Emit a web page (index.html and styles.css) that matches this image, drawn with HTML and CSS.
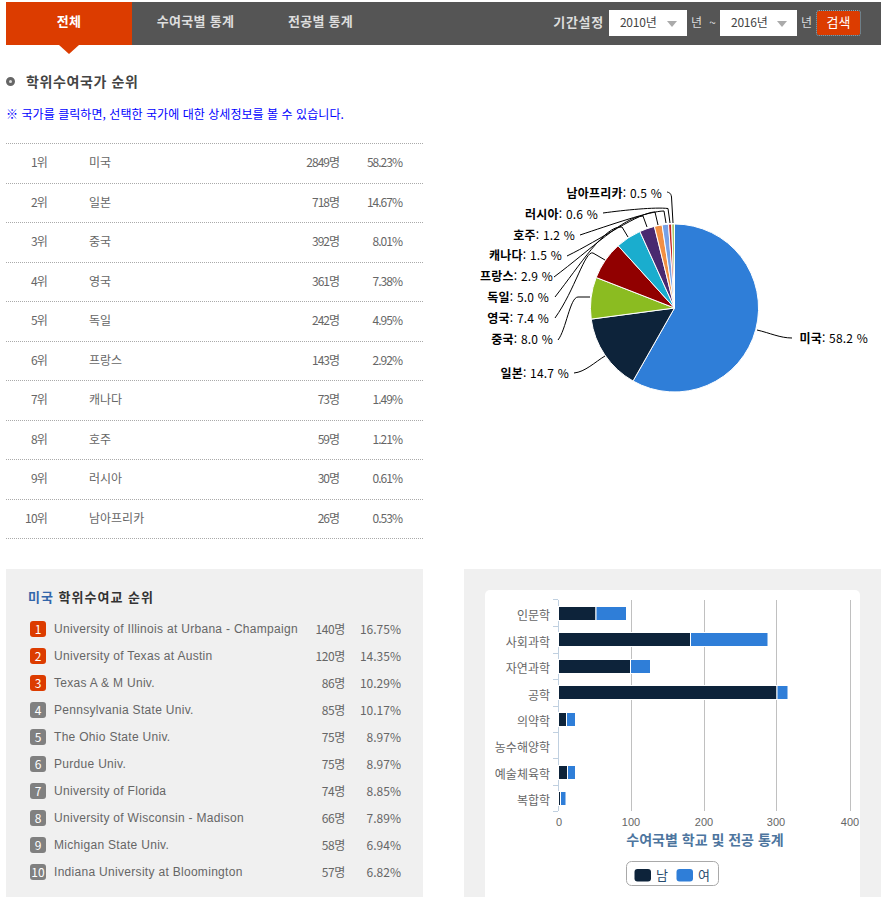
FILE: index.html
```html
<!DOCTYPE html>
<html lang="ko">

<head>
    <meta charset="UTF-8">
    <meta name="viewport" content="width=device-width, initial-scale=1.0">
    <title>학위수여국가 순위</title>
    <link rel="stylesheet" href="styles.css">
</head>

<body>
    <div class="page">
        <nav class="top-nav">
            <ul class="tabs">
                <li class="tab tab-active"><a href="#">전체</a></li>
                <li class="tab tab-country"><a href="#">수여국별 통계</a></li>
                <li class="tab tab-major"><a href="#">전공별 통계</a></li>
            </ul>
            <form class="period">
                <span class="period-label">기간설정</span>
                <span class="year-select"><select><option>2010년</option></select></span>
                <span class="period-text">년 ~</span>
                <span class="year-select year-select-end"><select><option>2016년</option></select></span>
                <span class="period-text">년</span>
                <button type="button" class="search-btn">검색</button>
            </form>
        </nav>

        <div class="columns">
            <section class="country-rank">
                <h2 class="section-title">학위수여국가 순위</h2>
                <p class="notice">※ 국가를 클릭하면, 선택한 국가에 대한 상세정보를 볼 수 있습니다.</p>
                <ul class="rank-list">
                    <li><span class="r-no">1위</span><span>미국</span><span class="r-num">2849명</span><span class="r-num">58.23%</span></li>
                    <li><span class="r-no">2위</span><span>일본</span><span class="r-num">718명</span><span class="r-num">14.67%</span></li>
                    <li><span class="r-no">3위</span><span>중국</span><span class="r-num">392명</span><span class="r-num">8.01%</span></li>
                    <li><span class="r-no">4위</span><span>영국</span><span class="r-num">361명</span><span class="r-num">7.38%</span></li>
                    <li><span class="r-no">5위</span><span>독일</span><span class="r-num">242명</span><span class="r-num">4.95%</span></li>
                    <li><span class="r-no">6위</span><span>프랑스</span><span class="r-num">143명</span><span class="r-num">2.92%</span></li>
                    <li><span class="r-no">7위</span><span>캐나다</span><span class="r-num">73명</span><span class="r-num">1.49%</span></li>
                    <li><span class="r-no">8위</span><span>호주</span><span class="r-num">59명</span><span class="r-num">1.21%</span></li>
                    <li><span class="r-no">9위</span><span>러시아</span><span class="r-num">30명</span><span class="r-num">0.61%</span></li>
                    <li><span class="r-no">10위</span><span>남아프리카</span><span class="r-num">26명</span><span class="r-num">0.53%</span></li>
                </ul>
            </section>

            <section class="pie-area">
                <svg class="pie" width="417" height="494" viewBox="464 45 417 494">
                    <!-- 조각 -->
                    <g transform="translate(674.5 308)" stroke="#fff" stroke-width="1" stroke-linejoin="round">
                        <path fill="#2f7ed8" d="M0 0V-84A84 84 0 1 1 -41.5 73Z"/>
                        <path fill="#0d233a" d="M0 0L-41.5 73A84 84 0 0 1 -83.3 11.1Z"/>
                        <path fill="#8bbc21" d="M0 0L-83.3 11.1A84 84 0 0 1 -78.3 -30.5Z"/>
                        <path fill="#910000" d="M0 0L-78.3 -30.5A84 84 0 0 1 -56.4 -62.3Z"/>
                        <path fill="#1aadce" d="M0 0L-56.4 -62.3A84 84 0 0 1 -34.6 -76.5Z"/>
                        <path fill="#492970" d="M0 0L-34.6 -76.5A84 84 0 0 1 -20.1 -81.6Z"/>
                        <path fill="#f28f43" d="M0 0L-20.1 -81.6A84 84 0 0 1 -12.4 -83.1Z"/>
                        <path fill="#77a1e5" d="M0 0L-12.4 -83.1A84 84 0 0 1 -6 -83.8Z"/>
                        <path fill="#c42525" d="M0 0L-6 -83.8A84 84 0 0 1 -2.8 -84Z"/>
                        <path fill="#a6c96a" d="M0 0L-2.8 -84A84 84 0 0 1 0 -84Z"/>
                    </g>
                    <!-- 연결선 -->
                    <g class="connector">
                        <path d="M757 330C770 333 780 338 792 338"/>
                        <path d="M605 356C595 362 585 372 574 373"/>
                        <path d="M590 297L578 297C570 297 566 330 558 340"/>
                        <path d="M605 260L593 253C585 250 575 290 555 318"/>
                        <path d="M628 237L622 227C605 225 580 265 555 297"/>
                        <path d="M647 227L643 216C625 216 590 250 554 277"/>
                        <path d="M658 225L655 212C640 212 600 240 567 256"/>
                        <path d="M666 223L664 211C650 211 610 225 580 235"/>
                        <path d="M670 223L668 208.5C655 207 625 210 603 213"/>
                        <path d="M673 223L671.5 197C671 193 669 192.5 667 192"/>
                    </g>
                    <!-- 라벨 -->
                    <g class="pie-label">
                        <text x="662" y="198"><tspan class="pie-name">남아프리카</tspan>: 0.5 %</text>
                        <text x="598" y="219"><tspan class="pie-name">러시아</tspan>: 0.6 %</text>
                        <text x="575" y="240"><tspan class="pie-name">호주</tspan>: 1.2 %</text>
                        <text x="562" y="260"><tspan class="pie-name">캐나다</tspan>: 1.5 %</text>
                        <text x="553" y="281"><tspan class="pie-name">프랑스</tspan>: 2.9 %</text>
                        <text x="549" y="302"><tspan class="pie-name">독일</tspan>: 5.0 %</text>
                        <text x="549" y="323"><tspan class="pie-name">영국</tspan>: 7.4 %</text>
                        <text x="553" y="344"><tspan class="pie-name">중국</tspan>: 8.0 %</text>
                        <text x="569" y="378"><tspan class="pie-name">일본</tspan>: 14.7 %</text>
                        <text x="868" y="343"><tspan class="pie-name">미국</tspan>: 58.2 %</text>
                    </g>
                </svg>
            </section>

            <section class="panel school-panel">
                <h3 class="panel-title"><em>미국</em> 학위수여교 순위</h3>
                <ol class="school-list">
                    <li><span class="badge badge-top">1</span><span class="s-name">University of Illinois at Urbana - Champaign</span><span class="s-num">140명</span><span class="s-pct">16.75%</span></li>
                    <li><span class="badge badge-top">2</span><span class="s-name">University of Texas at Austin</span><span class="s-num">120명</span><span class="s-pct">14.35%</span></li>
                    <li><span class="badge badge-top">3</span><span class="s-name">Texas A &amp; M Univ.</span><span class="s-num">86명</span><span class="s-pct">10.29%</span></li>
                    <li><span class="badge">4</span><span class="s-name">Pennsylvania State Univ.</span><span class="s-num">85명</span><span class="s-pct">10.17%</span></li>
                    <li><span class="badge">5</span><span class="s-name">The Ohio State Univ.</span><span class="s-num">75명</span><span class="s-pct">8.97%</span></li>
                    <li><span class="badge">6</span><span class="s-name">Purdue Univ.</span><span class="s-num">75명</span><span class="s-pct">8.97%</span></li>
                    <li><span class="badge">7</span><span class="s-name">University of Florida</span><span class="s-num">74명</span><span class="s-pct">8.85%</span></li>
                    <li><span class="badge">8</span><span class="s-name">University of Wisconsin - Madison</span><span class="s-num">66명</span><span class="s-pct">7.89%</span></li>
                    <li><span class="badge">9</span><span class="s-name">Michigan State Univ.</span><span class="s-num">58명</span><span class="s-pct">6.94%</span></li>
                    <li><span class="badge">10</span><span class="s-name">Indiana University at Bloomington</span><span class="s-num">57명</span><span class="s-pct">6.82%</span></li>
                </ol>
            </section>

            <section class="panel chart-panel">
                <div class="chart-card">
                    <svg class="bar-chart" width="375" height="307" viewBox="485 590 375 307">
                        <!-- 격자 -->
                        <g class="grid-line">
                            <path d="M631.5 600V811M704.5 600V811M776.5 600V811M850.5 600V811"/>
                        </g>
                        <g class="axis-line">
                            <path d="M558.5 600V811"/>
                            <path d="M553 599.5H558M553 626.5H558M553 653.5H558M553 679.5H558M553 706.5H558M553 732.5H558M553 758.5H558M553 785.5H558M553 811.5H558"/>
                        </g>
                        <!-- 막대: 남 -->
                        <g fill="#0d233a" stroke="#fff">
                            <rect x="558.5" y="606.5" width="37.5" height="14"/>
                            <rect x="558.5" y="632.5" width="132" height="14"/>
                            <rect x="558.5" y="659.5" width="72" height="14"/>
                            <rect x="558.5" y="685.5" width="218.5" height="14"/>
                            <rect x="558.5" y="712.5" width="8" height="14"/>
                            <rect x="558.5" y="765.5" width="9" height="14"/>
                            <rect x="558.5" y="791.5" width="2" height="14"/>
                        </g>
                        <!-- 막대: 여 -->
                        <g fill="#2f7ed8" stroke="#fff">
                            <rect x="596" y="606.5" width="30.5" height="14"/>
                            <rect x="690.5" y="632.5" width="77.5" height="14"/>
                            <rect x="630.5" y="659.5" width="20" height="14"/>
                            <rect x="777" y="685.5" width="11" height="14"/>
                            <rect x="566.5" y="712.5" width="9" height="14"/>
                            <rect x="567.5" y="765.5" width="8" height="14"/>
                            <rect x="560.5" y="791.5" width="5.5" height="14"/>
                        </g>
                        <g class="cat-label">
                            <text x="550" y="620">인문학</text>
                            <text x="550" y="647">사회과학</text>
                            <text x="550" y="673">자연과학</text>
                            <text x="550" y="700">공학</text>
                            <text x="550" y="726">의약학</text>
                            <text x="550" y="752">농수해양학</text>
                            <text x="550" y="779">예술체육학</text>
                            <text x="550" y="805">복합학</text>
                        </g>
                        <g class="val-label">
                            <text x="559" y="826">0</text>
                            <text x="631" y="826">100</text>
                            <text x="704" y="826">200</text>
                            <text x="776" y="826">300</text>
                            <text x="850" y="826">400</text>
                        </g>
                        <text class="chart-title" x="705" y="845">수여국별 학교 및 전공 통계</text>
                        <!-- 범례 -->
                        <rect class="legend-box" x="626.5" y="861.5" width="92" height="24" rx="5"/>
                        <rect x="634.5" y="869" width="16.5" height="12.5" rx="3" fill="#0d233a"/>
                        <text class="legend-text" x="656" y="880">남</text>
                        <rect x="676.5" y="869" width="16.5" height="12.5" rx="3" fill="#2f7ed8"/>
                        <text class="legend-text" x="698" y="880">여</text>
                    </svg>
                </div>
            </section>
        </div>
    </div>
</body>

</html>
```

FILE: styles.css
```css
/* 기본 */
* {
    box-sizing: border-box;
}

html,
body {
    margin: 0;
    padding: 0;
    background-color: #fff;
}

body {
    font-family: "Noto Sans CJK KR", "Liberation Sans", sans-serif;
    font-size: 12px;
    color: #666;
}

ul,
ol {
    list-style: none;
    margin: 0;
    padding: 0;
}

.page {
    width: 885px;
    height: 897px;
    padding: 2px 4px 0 6px;
    overflow: hidden;
}

/* 상단 메뉴 */
.top-nav {
    position: relative;
    display: flex;
    justify-content: space-between;
    height: 43px;
    background-color: #555;
}

.tabs {
    display: flex;
}

.tab a {
    display: block;
    height: 43px;
    line-height: 38px;
    text-align: center;
    text-decoration: none;
    font-size: 13px;
    font-weight: bold;
    letter-spacing: 0.3px;
    color: #ddd;
}

.tab-active a {
    width: 126px;
    background-color: #dc3c00;
    color: #fff;
}

.tab-active {
    position: relative;
}

/* 선택된 탭 아래 화살표 */
.tab-active::after {
    content: "";
    position: absolute;
    left: 53px;
    top: 43px;
    border-left: 10px solid transparent;
    border-right: 10px solid transparent;
    border-top: 9px solid #dc3c00;
}

.tab-country a {
    width: 127px;
}

.tab-major a {
    width: 123px;
}

.period {
    display: flex;
    align-items: flex-start;
    padding: 8px 21px 0 0;
    color: #ddd;
}

.period-label {
    margin-right: 5px;
    line-height: 24px;
    font-size: 13px;
    font-weight: bold;
    letter-spacing: 0.7px;
}

.period-text {
    margin: 0 4px;
    line-height: 24px;
    word-spacing: 4px;
}

.year-select {
    position: relative;
    display: block;
    width: 78px;
    height: 26px;
    background-color: #fff;
}

.year-select-end {
    width: 77px;
}

.year-select::after {
    content: "";
    position: absolute;
    right: 10px;
    top: 11px;
    border-left: 5px solid transparent;
    border-right: 5px solid transparent;
    border-top: 6px solid #aaa;
}

.year-select select {
    appearance: none;
    width: 100%;
    height: 26px;
    padding: 0 0 3px 11px;
    border: none;
    background: transparent;
    font-family: inherit;
    font-size: 12px;
    letter-spacing: -0.2px;
    color: #444;
}

.search-btn {
    width: 43px;
    height: 24px;
    margin: 1px 0 0 1px;
    padding: 0 0 3px;
    border: none;
    border-radius: 2px;
    outline: 1px dotted #8ab;
    background-color: #dc3c00;
    font-family: inherit;
    font-size: 13px;
    color: #fff;
}

/* 본문 */
.columns {
    display: grid;
    grid-template-columns: 417px 417px;
    column-gap: 41px;
    row-gap: 30px;
}

.section-title {
    position: relative;
    height: 18px;
    margin: 27px 0 0;
    padding-left: 20px;
    line-height: 18px;
    font-size: 14px;
    font-weight: bold;
    letter-spacing: 0.6px;
    color: #444;
}

.section-title::before {
    content: "";
    position: absolute;
    left: 0;
    top: 5px;
    width: 3px;
    height: 3px;
    border: 3px solid #666;
    border-radius: 50%;
    background-color: #ddd;
}

.notice {
    height: 16px;
    margin: 16px 0 0;
    line-height: 16px;
    letter-spacing: 0.05px;
    color: #00f;
}

.rank-list {
    margin-top: 21px;
    border-top: 1px dotted #aaa;
}

.rank-list li {
    display: grid;
    grid-template-columns: 41px 42px 1fr 62px 63px;
    height: 39.5px;
    padding: 0 21px 3px 0;
    align-items: center;
    border-bottom: 1px dotted #aaa;
}

.rank-list li span:nth-child(2) {
    grid-column: 3;
}

.r-no {
    grid-column: 1;
    text-align: right;
    letter-spacing: -0.8px;
}

.r-num {
    text-align: right;
    letter-spacing: -1px;
}

.pie {
    display: block;
}

.connector path {
    fill: none;
    stroke: #000;
    stroke-width: 1;
}

.pie-label text {
    text-anchor: end;
    font-size: 12px;
    letter-spacing: 0.2px;
    fill: #000;
}

.pie-name {
    font-weight: bold;
}

/* 하단 패널 */
.panel {
    height: 328px;
    background-color: #f0f0f0;
    overflow: hidden;
}

.school-panel {
    padding: 20px 22px 0 24px;
}

.panel-title {
    height: 16px;
    margin: 0 0 10px -2px;
    line-height: 16px;
    font-size: 13px;
    font-weight: bold;
    letter-spacing: 1px;
    color: #333;
}

.panel-title em {
    font-style: normal;
    color: #3366aa;
}

.school-list li {
    display: flex;
    align-items: center;
    height: 27px;
}

.badge {
    flex: none;
    width: 16px;
    height: 16px;
    margin-right: 8px;
    border-radius: 3px;
    background-color: #808080;
    line-height: 16px;
    text-align: center;
    color: #fff;
}

.badge-top {
    background-color: #dc3c00;
}

.s-name {
    flex: 1;
    min-width: 0;
    white-space: nowrap;
    font-family: "Liberation Sans", "Noto Sans CJK KR", sans-serif;
    letter-spacing: 0.3px;
}

.s-num {
    width: 48px;
    text-align: right;
    letter-spacing: -0.4px;
}

.s-pct {
    width: 56px;
    text-align: right;
}

.chart-panel {
    padding: 21px 21px 0;
}

.chart-card {
    height: 307px;
    border-radius: 5px 5px 0 0;
    background-color: #fff;
}

.bar-chart {
    display: block;
}

.grid-line path {
    fill: none;
    stroke: #c0c0c0;
}

.axis-line path {
    fill: none;
    stroke: #c0d0e0;
}

.cat-label text {
    text-anchor: end;
    font-size: 12px;
    fill: #666;
}

.val-label text {
    text-anchor: middle;
    font-family: "Liberation Sans", sans-serif;
    font-size: 11px;
    fill: #666;
}

.chart-title {
    text-anchor: middle;
    font-size: 14px;
    font-weight: bold;
    fill: #4d759e;
}

.legend-box {
    fill: #fff;
    stroke: #a9a9a9;
}

.legend-text {
    font-size: 13px;
    fill: #274b6d;
}
```
